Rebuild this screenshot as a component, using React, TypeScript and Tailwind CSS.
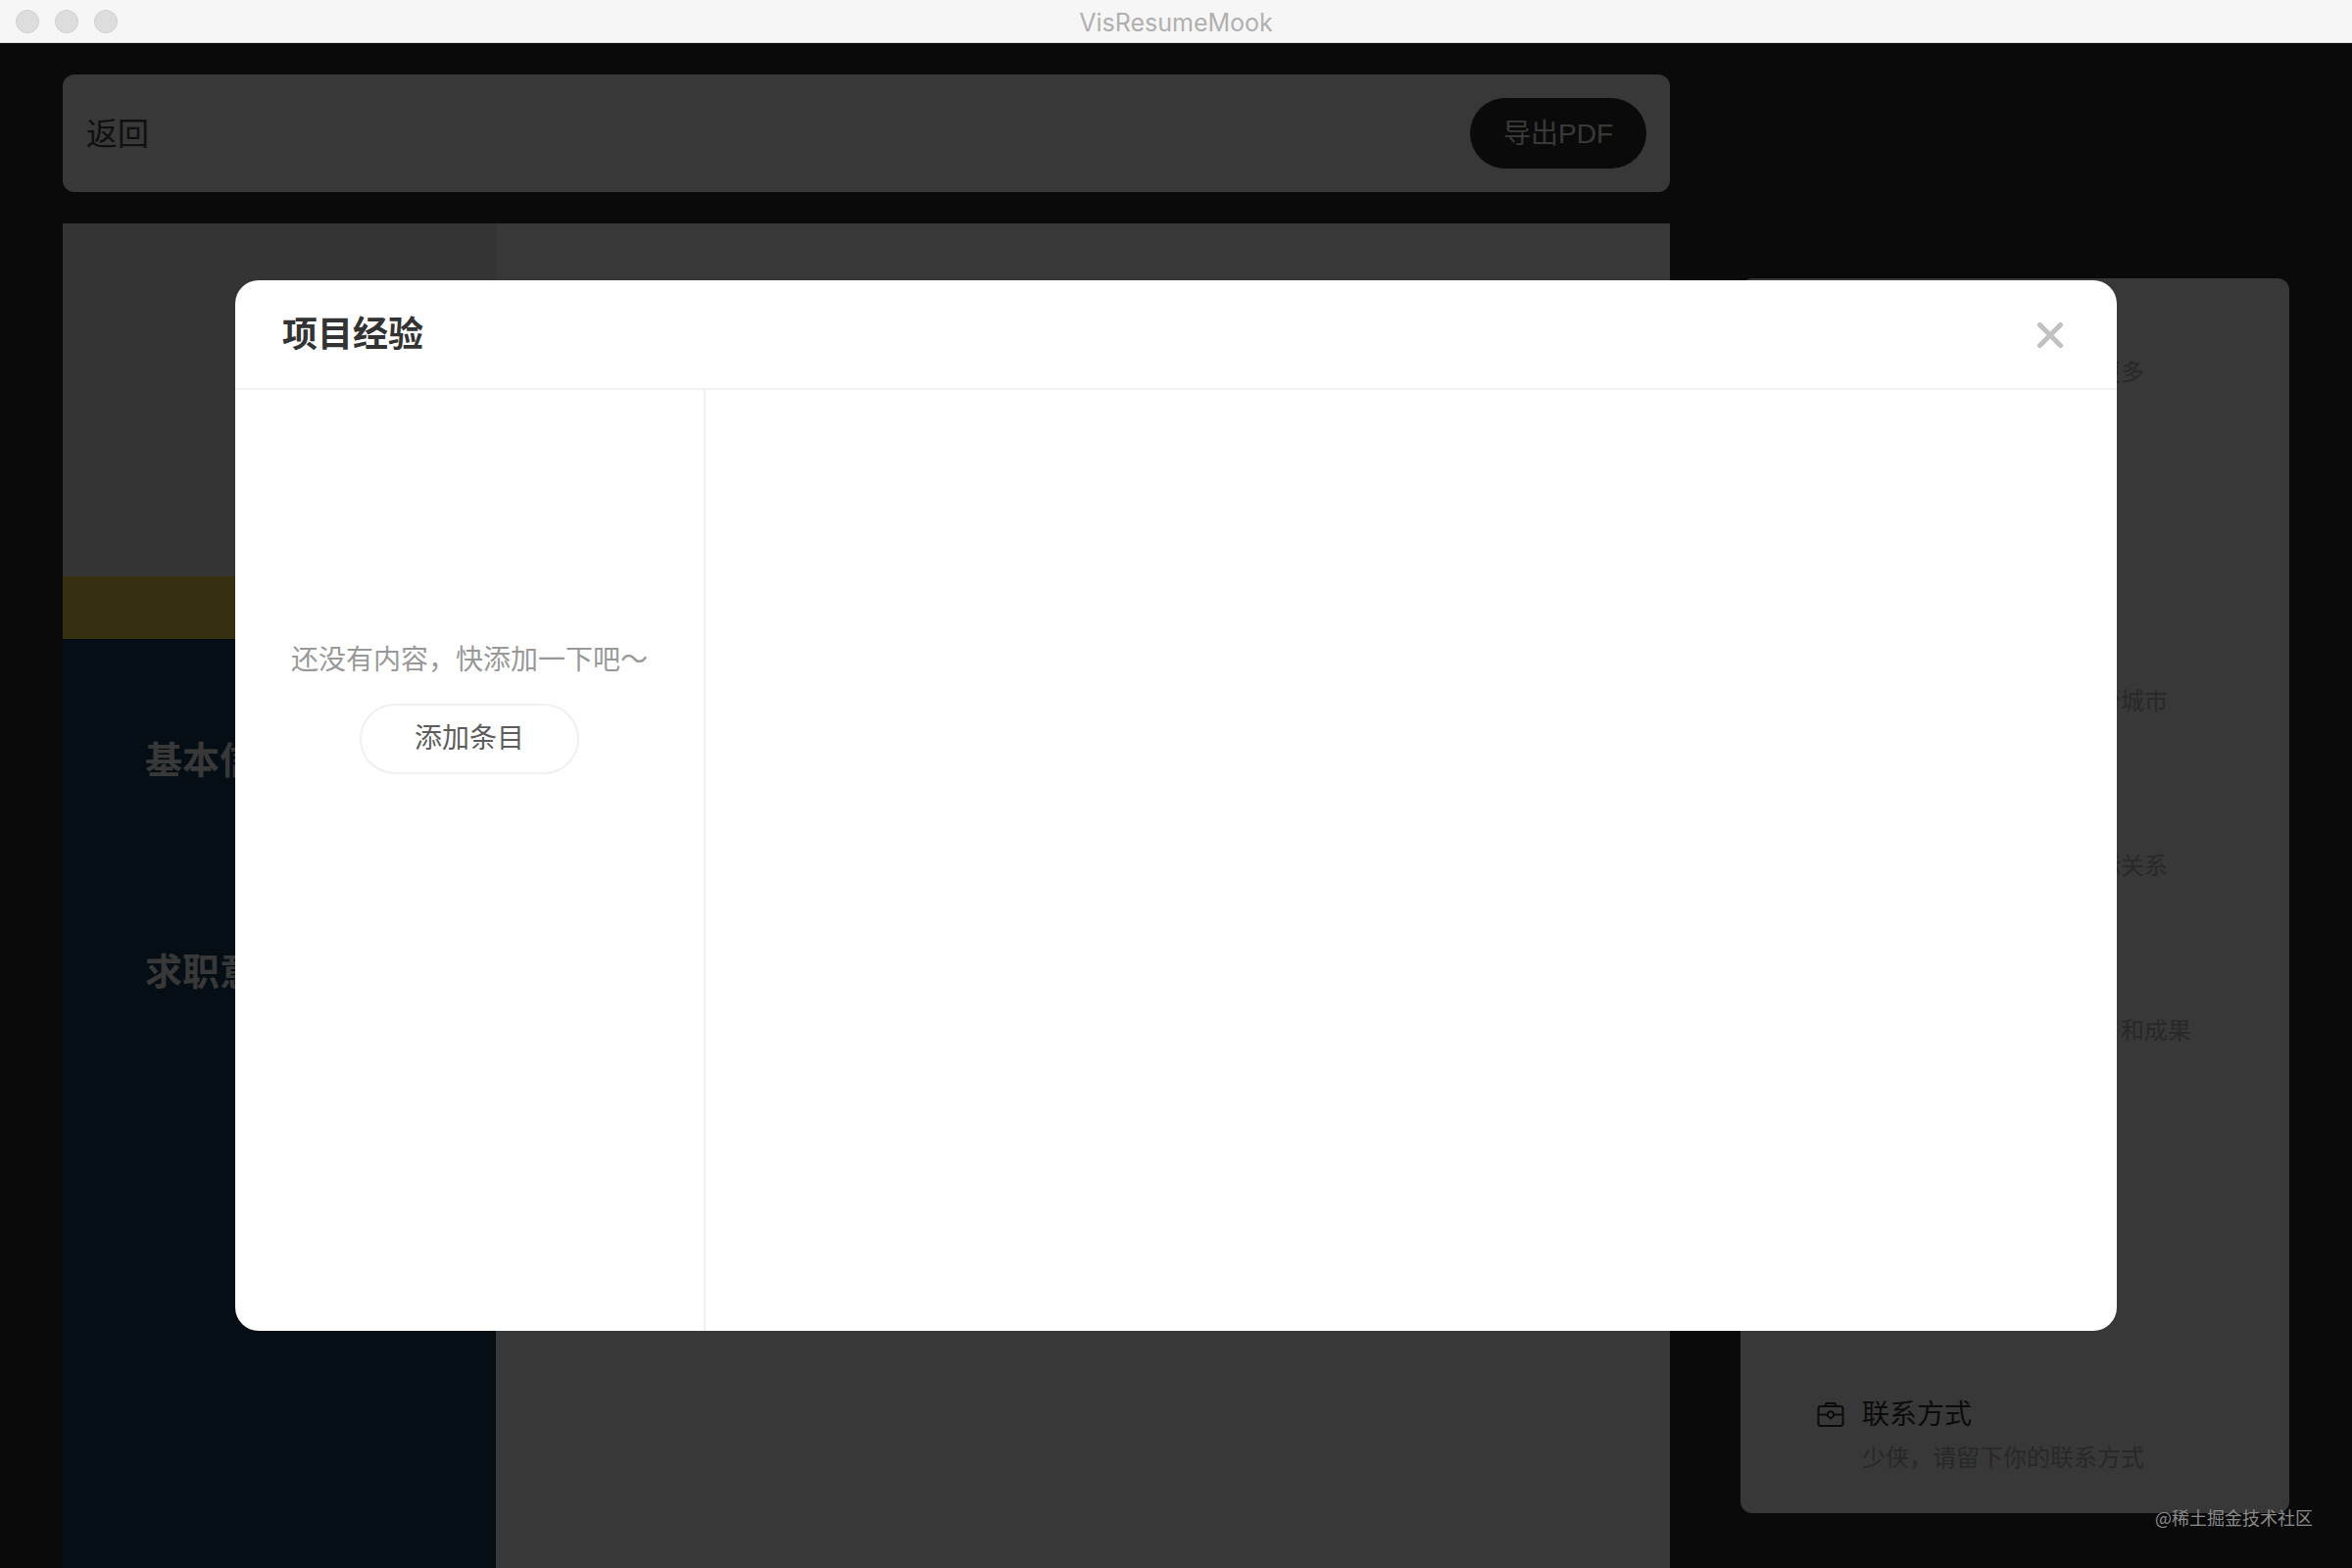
import React from 'react';

type ModuleItem = { title: string; desc: string };

const modules: ModuleItem[] = [
  { title: '基本信息', desc: '介绍自己，让人事了解更多' },
  { title: '教育背景', desc: '填写你的学习经历' },
  { title: '求职意向', desc: '说一说你想要去的那一份城市' },
  { title: '校园经历', desc: '说说校园经历，体现人际关系' },
  { title: '项目经验', desc: '展示一下你做过的项目，和成果' },
];

function BagIcon() {
  return (
    <svg
      viewBox="0 0 28 28"
      className="size-7 shrink-0"
      fill="none"
      stroke="#333"
      strokeWidth="2"
      strokeLinejoin="round"
      aria-hidden="true"
    >
      <rect x="1.5" y="5" width="25" height="20" rx="2.5" />
      <path d="M8 5 L9.5 2 H18.5 L20 5 M1.5 13.5 H11 M17 13.5 H26.5" />
      <path d="M12.5 10.5 H15.5 L17 12 V15 L14 17.5 L11 15 V12 Z" />
    </svg>
  );
}

function ModuleRow({ title, desc }: ModuleItem) {
  return (
    <li className="px-[78px]">
      <div className="flex items-center gap-[18px]">
        <BagIcon />
        <h3 className="text-[28px] leading-10 text-[#333]">{title}</h3>
      </div>
      <p className="mt-1.5 pl-[46px] text-2xl leading-9 whitespace-nowrap text-[#b4b4b4]">{desc}</p>
    </li>
  );
}

function TitleBar() {
  return (
    <header className="relative flex h-11 items-center justify-center border-b border-[#d4d4d4] bg-[#f6f6f6] pt-0.5">
      <div className="absolute top-2.5 left-4 flex gap-4">
        <span className="size-6 rounded-full border border-[#d0d0d0] bg-[#dddddd]" />
        <span className="size-6 rounded-full border border-[#d0d0d0] bg-[#dddddd]" />
        <span className="size-6 rounded-full border border-[#d0d0d0] bg-[#dddddd]" />
      </div>
      <h1 className="font-['Inter','Noto_Sans_CJK_SC',sans-serif] text-[25px] leading-8 text-[#b0b0b0]">
        VisResumeMook
      </h1>
    </header>
  );
}

function Editor() {
  return (
    <div className="flex min-h-[calc(100vh-44px)] gap-[72px] bg-[#2e2e2e] pt-8 pr-16 pl-16">
      <main className="flex flex-1 flex-col gap-8">
        <div className="flex h-[120px] items-center justify-between rounded-xl bg-white px-6">
          <a href="#" className="pt-0.5 text-[32px] leading-10 text-[#4a4a4a]">
            返回
          </a>
          <button
            type="button"
            className="h-[72px] rounded-full bg-[#2e2e2e] px-[34px] pt-0.5 text-[28px] leading-10 text-white"
          >
            导出PDF
          </button>
        </div>
        <div className="flex flex-1 bg-white">
          <aside className="flex w-[442px] flex-col bg-[#ececec]">
            <div className="h-[360px]" />
            <div className="h-16 bg-[#f5dc4e]" />
            <div className="flex flex-1 flex-col gap-[156px] bg-[#14405c] px-[84px] pt-[94px]">
              <h2 className="text-[38px] leading-[60px] font-bold text-white">基本信息</h2>
              <h2 className="text-[38px] leading-[60px] font-bold text-white">求职意向</h2>
            </div>
          </aside>
        </div>
      </main>
      <aside className="mt-52 mb-14 flex w-[560px] flex-col justify-between rounded-xl bg-white pt-8 pb-[38px]">
        <ul className="flex flex-col gap-[86px]">
          {modules.map((m) => (
            <ModuleRow key={m.desc} title={m.title} desc={m.desc} />
          ))}
        </ul>
        <ul>
          <ModuleRow title="联系方式" desc="少侠，请留下你的联系方式" />
        </ul>
      </aside>
    </div>
  );
}

function ProjectDialog() {
  return (
    <section
      role="dialog"
      aria-labelledby="dialog-title"
      className="flex h-[67vh] w-4/5 flex-col overflow-hidden rounded-3xl bg-white"
    >
      <header className="flex h-28 shrink-0 items-center justify-between border-b-2 border-[#f0f0f0] px-12 pt-0.5">
        <h2 id="dialog-title" className="text-4xl font-bold text-[#333]">
          项目经验
        </h2>
        <button type="button" aria-label="关闭" className="flex size-10 items-center justify-center">
          <svg viewBox="0 0 28 28" className="size-7" stroke="#bfc1c2" strokeWidth="5" strokeLinecap="round" aria-hidden="true">
            <path d="M3.5 3.5 L24.5 24.5 M24.5 3.5 L3.5 24.5" />
          </svg>
        </button>
      </header>
      <div className="flex flex-1">
        <div className="flex w-1/4 flex-col items-center border-r-2 border-[#f0f0f0] pt-64">
          <p className="text-[28px] leading-10 text-[#999]">还没有内容，快添加一下吧～</p>
          <button
            type="button"
            className="mt-6 h-[72px] w-56 rounded-full border-2 border-[#f0f0f0] text-[28px] leading-10 text-[#5c5c5c]"
          >
            添加条目
          </button>
        </div>
        <div className="flex-1" />
      </div>
    </section>
  );
}

export default function App() {
  return (
    <div className="relative h-screen overflow-hidden font-['Liberation_Sans','Noto_Sans_CJK_SC',sans-serif]">
      <TitleBar />
      <Editor />
      <div className="absolute inset-x-0 top-11 bottom-0 flex items-center justify-center bg-black/78">
        <ProjectDialog />
      </div>
      <p className="absolute right-10 bottom-[38px] font-['Noto_Sans_CJK_SC',sans-serif] text-lg leading-7 text-[#8a8a8a]">
        @稀土掘金技术社区
      </p>
    </div>
  );
}
